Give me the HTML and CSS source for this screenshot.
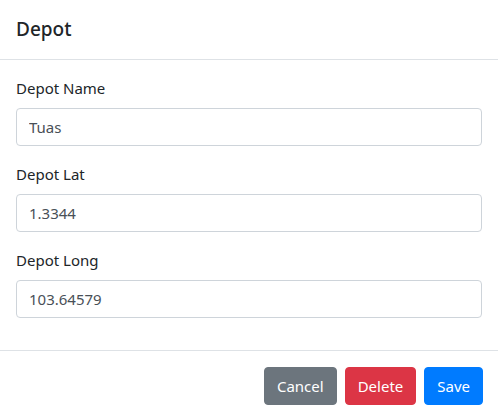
FILE: index.html
```html
<!DOCTYPE html>
<html lang="en">
<head>
<meta charset="utf-8">
<title>Depot</title>
<link rel="stylesheet" href="styles.css">
</head>
<body>
<div class="modal">
  <div class="modal-header">
    <h5 class="modal-title">Depot</h5>
  </div>
  <div class="modal-body">
    <div class="form-group">
      <label class="form-label" for="name">Depot Name</label>
      <input class="form-control" id="name" type="text" value="Tuas">
    </div>
    <div class="form-group">
      <label class="form-label" for="lat">Depot Lat</label>
      <input class="form-control" id="lat" type="text" value="1.3344">
    </div>
    <div class="form-group">
      <label class="form-label" for="long">Depot Long</label>
      <input class="form-control" id="long" type="text" value="103.64579">
    </div>
  </div>
  <div class="modal-footer">
    <button class="btn btn-secondary" type="button">Cancel</button>
    <button class="btn btn-danger" type="button">Delete</button>
    <button class="btn btn-primary" type="button">Save</button>
  </div>
</div>
</body>
</html>
```
FILE: styles.css
```css
* { box-sizing: border-box; }
html, body {
  margin: 0;
  padding: 0;
  background: #fff;
}
body {
  font-family: "Noto Sans", "Open Sans", sans-serif;
  font-size: 15px;
  color: #212529;
}
.modal {
  width: 498px;
  background: #fff;
}
.modal-header {
  padding: 16px;
  border-bottom: 1px solid #dee2e6;
}
.modal-title {
  margin: 0;
  font-size: 19px;
  font-weight: 500;
  line-height: 27px;
}
.modal-body {
  padding: 16px;
}
.form-group {
  margin-bottom: 16px;
}
.form-label {
  display: block;
  line-height: 24px;
  margin-bottom: 8px;
}
.form-control {
  display: block;
  width: 100%;
  height: 38px;
  padding: 6px 12px;
  font-family: inherit;
  font-size: 15px;
  color: #495057;
  background: #fff;
  border: 1px solid #ced4da;
  border-radius: 4px;
  outline: none;
}
.modal-footer {
  display: flex;
  justify-content: flex-end;
  align-items: center;
  padding: 12px 11px 12px 12px;
  border-top: 1px solid #dee2e6;
}
.btn {
  margin: 4px;
  height: 38px;
  padding: 6px 12px;
  font-family: inherit;
  font-size: 15px;
  line-height: 24px;
  color: #fff;
  border: 1px solid transparent;
  border-radius: 4px;
}
.btn-secondary { background: #6c757d; border-color: #6c757d; }
.btn-danger { background: #dc3545; border-color: #dc3545; }
.btn-primary { background: #007bff; border-color: #007bff; }
```
